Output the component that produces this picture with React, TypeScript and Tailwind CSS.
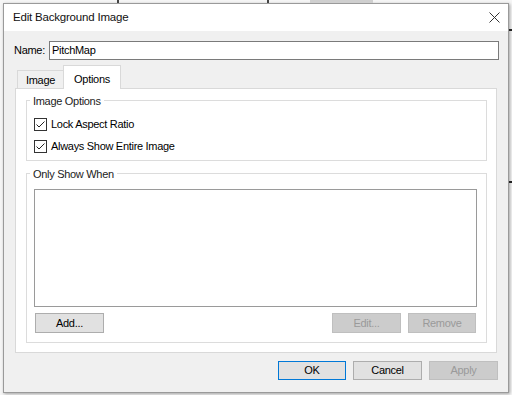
import React from "react";

function Btn({ children, w, h = 20, variant = "normal" }: { children: React.ReactNode; w: number; h?: number; variant?: "normal" | "default" | "disabled" }) {
  const cls =
    variant === "disabled"
      ? "bg-[#cccccc] border-[#bfbfbf] text-[#9a9a9a]"
      : variant === "default"
      ? "bg-[#e1e1e1] border-[#0078d7] text-black"
      : "bg-[#e1e1e1] border-[#adadad] text-black";
  return (
    <div className={`flex items-center justify-center border ${cls}`} style={{ width: w, height: h }}>
      {children}
    </div>
  );
}

function Check({ label }: { label: string }) {
  return (
    <div className="flex items-center gap-[4px] h-[13px]">
      <div className="w-[13px] h-[13px] border border-[#333333] bg-white flex items-center justify-center">
        <svg width="11" height="11" viewBox="0 0 11 11">
          <polyline points="1.5,5.5 4,8 9.5,2.5" fill="none" stroke="#222" strokeWidth="1" />
        </svg>
      </div>
      <span className="leading-none">{label}</span>
    </div>
  );
}

export default function App() {
  return (
    <div className="relative w-[512px] h-[395px] overflow-hidden bg-[#f6f6f6] text-[11px] tracking-[-0.3px] text-black font-['Liberation_Sans',Arial,sans-serif]">
      {/* background bits behind the dialog */}
      <div className="absolute left-[117px] top-0 w-[2px] h-[3px] bg-[#444]" />
      <div className="absolute left-[267px] top-0 w-[2px] h-[3px] bg-[#444]" />
      <div className="absolute left-[310px] top-0 w-[63px] h-[3px] bg-[#cfcfcf]" />
      <div className="absolute left-[509px] top-[29px] w-[3px] h-[2px] bg-[#222]" />
      <div className="absolute left-[509px] top-[181px] w-[3px] h-[2px] bg-[#222]" />

      <div className="ml-[3px] mt-[3px] w-[506px] h-[390px] border border-[#9a9a9a] bg-[#f0f0f0] flex flex-col shadow-[1px_1px_3px_rgba(0,0,0,0.35)]">
        {/* title bar */}
        <div className="h-[27px] bg-white flex items-center justify-between pl-[9px] pr-[8px]">
          <span className="text-[11.5px] tracking-[-0.2px] text-[#111]">Edit Background Image</span>
          <svg width="11" height="11" viewBox="0 0 11 11">
            <path d="M0.5 0.5 L10.5 10.5 M10.5 0.5 L0.5 10.5" stroke="#333" strokeWidth="1" />
          </svg>
        </div>

        {/* name row */}
        <div className="mt-[10px] flex items-center pl-[10px] pr-[9px]">
          <span>Name:</span>
          <div className="ml-auto w-[450px] h-[19px] border border-[#7a7a7a] bg-white flex items-center pl-[2px]">PitchMap</div>
        </div>

        {/* tabs */}
        <div className="mt-[5px] ml-[13px] flex items-end h-[23px]">
          <div className="w-[47px] h-[18px] border border-b-0 border-[#d9d9d9] bg-[#f0f0f0] flex items-center justify-center pt-[2px]">Image</div>
          <div className="relative z-10 -ml-px w-[58px] h-[24px] -mb-px border border-b-0 border-[#d9d9d9] bg-white flex items-start justify-center pt-[5px]">Options</div>
        </div>

        {/* panel */}
        <div className="mx-[11px] h-[265px] border border-[#d9d9d9] bg-white flex flex-col">
          <div className="relative mt-[11px] ml-[10px] mr-[9px] h-[61px] border border-[#dcdcdc] pl-[7px] pt-[17px] flex flex-col gap-[9px]">
            <span className="absolute -top-[8px] left-[3px] px-[3px] bg-white text-[#222]">Image Options</span>
            <Check label="Lock Aspect Ratio" />
            <Check label="Always Show Entire Image" />
          </div>

          <div className="relative mt-[12px] ml-[10px] mr-[9px] h-[170px] border border-[#dcdcdc] pl-[7px] pr-[9px] pt-[15px] flex flex-col">
            <span className="absolute -top-[8px] left-[3px] px-[3px] bg-white text-[#222]">Only Show When</span>
            <div className="h-[118px] border border-[#9a9a9a] bg-white" />
            <div className="mt-[6px] px-[1px] flex items-center">
              <Btn w={69}>Add...</Btn>
              <div className="ml-auto flex gap-[7px]">
                <Btn w={69} variant="disabled">Edit...</Btn>
                <Btn w={68} variant="disabled">Remove</Btn>
              </div>
            </div>
          </div>
        </div>

        {/* bottom buttons */}
        <div className="mt-[8px] mr-[10px] flex justify-end gap-[7px]">
          <Btn w={68} h={19} variant="default">OK</Btn>
          <Btn w={69} h={19}>Cancel</Btn>
          <Btn w={69} h={19} variant="disabled">Apply</Btn>
        </div>
      </div>
    </div>
  );
}
